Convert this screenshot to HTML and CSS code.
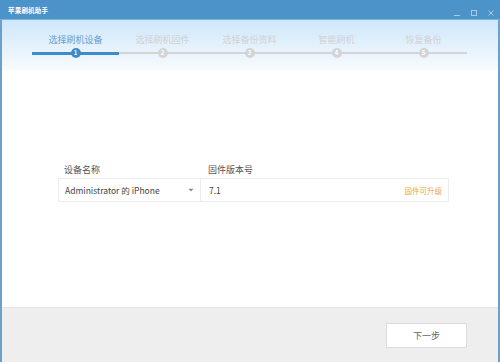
FILE: index.html
```html
<!DOCTYPE html>
<html>
<head>
<meta charset="utf-8">
<title>苹果刷机助手</title>
<link rel="stylesheet" href="styles.css">
</head>
<body>
<div class="window">
  <div class="titlebar">
    <span class="title">苹果刷机助手</span>
    <div class="controls">
      <svg class="ctl" width="8" height="8" viewBox="0 0 8 8"><path d="M1 6.5h6" stroke="#a9cbe6" stroke-width="1"/></svg>
      <svg class="ctl" width="8" height="8" viewBox="0 0 8 8"><rect x="1.5" y="1.5" width="5" height="5" fill="none" stroke="#a9cbe6" stroke-width="1"/></svg>
      <svg class="ctl" width="8" height="8" viewBox="0 0 8 8"><path d="M1.5 1.5l5 5M6.5 1.5l-5 5" stroke="#a9cbe6" stroke-width="1"/></svg>
    </div>
  </div>

  <div class="steps">
    <div class="step done">
      <div class="step-name">选择刷机设备</div>
      <div class="track"><span class="dot">1</span></div>
    </div>
    <div class="step">
      <div class="step-name">选择刷机固件</div>
      <div class="track"><span class="dot">2</span></div>
    </div>
    <div class="step">
      <div class="step-name">选择备份资料</div>
      <div class="track"><span class="dot">3</span></div>
    </div>
    <div class="step">
      <div class="step-name">智能刷机</div>
      <div class="track"><span class="dot">4</span></div>
    </div>
    <div class="step">
      <div class="step-name">恢复备份</div>
      <div class="track"><span class="dot">5</span></div>
    </div>
  </div>

  <div class="main">
    <div class="form">
      <div class="field device">
        <div class="label">设备名称</div>
        <div class="box select">
          <span>Administrator 的 iPhone</span>
          <svg width="6" height="4" viewBox="0 0 6 4"><path d="M0.5 0.8h5L3 3.4z" fill="#888"/></svg>
        </div>
      </div>
      <div class="field firmware">
        <div class="label">固件版本号</div>
        <div class="box input">
          <span>7.1</span>
          <span class="hint">固件可升级</span>
        </div>
      </div>
    </div>
  </div>

  <div class="footer">
    <button class="next">下一步</button>
  </div>
</div>
</body>
</html>
```

FILE: styles.css
```css
/* 苹果刷机助手 - step 1 */

html, body
{ margin: 0;
  padding: 0;
}

body
{ width: 500px;
  height: 362px;
  overflow: hidden;
  font-family: "Noto Sans CJK SC", "Liberation Sans", sans-serif;
  color: #333;
}

.window
{ width: 500px;
  height: 362px;
  box-sizing: border-box;
  display: flex;
  flex-direction: column;
  border-left: 2px solid #6d9fcb;
  border-right: 2px solid #6d9fcb;
  background: #fff;
}

/* Title bar */

.titlebar
{ height: 19px;
  flex: none;
  margin: 0 -2px;
  background: #4c93c9;
  border-bottom: 1px solid #7fb2dd;
  display: flex;
  align-items: center;
  justify-content: space-between;
  padding: 0 5px 0 8px;
}

.title
{ color: #fff;
  font-size: 6.5px;
  font-weight: bold;
  letter-spacing: 0.2px;
}

.controls
{ display: flex;
  gap: 9px;
  margin-top: 6px;
}

/* Steps */

.steps
{ height: 50px;
  flex: none;
  background: linear-gradient(#cee7fa, #f8fbfe);
  display: grid;
  grid-template-columns: repeat(5, 87px);
  padding-left: 30px;
}

.step
{ display: flex;
  flex-direction: column;
  align-items: center;
}

.step-name
{ margin-top: 13px;
  height: 13px;
  font-size: 9px;
  line-height: 13px;
  color: #d0d2d4;
}

.step.done .step-name
{ color: #62a0cf;
}

.track
{ position: relative;
  width: 100%;
  height: 12px;
  margin-top: 1px;
  display: flex;
  justify-content: center;
  align-items: center;
}

.track::before
{ content: "";
  position: absolute;
  left: 0;
  right: 0;
  top: 5px;
  height: 2px;
  background: #d4d4d4;
}

.step.done .track::before
{ top: 5px;
  height: 3px;
  background: #3f8bc7;
}

.dot
{ position: relative;
  width: 10px;
  height: 10px;
  border-radius: 50%;
  background: #d4d4d4;
  color: #fff;
  font-size: 6px;
  line-height: 10px;
  text-align: center;
  font-weight: bold;
}

.step.done .dot
{ background: #3f8bc7;
}

/* Form */

.main
{ flex: 1;
  background: #fff;
}

.form
{ display: flex;
  margin: 92px 0 0 56px;
}

.label
{ font-size: 9px;
  height: 15px;
  line-height: 15px;
  padding-left: 6px;
  margin-bottom: 1px;
  color: #555;
}

.box
{ height: 24px;
  box-sizing: border-box;
  border: 1px solid #ededed;
  display: flex;
  align-items: center;
  justify-content: space-between;
  font-size: 8.5px;
  color: #444;
}

.device .box
{ width: 143px;
  padding: 0 6px 0 6px;
}

.firmware .box
{ width: 248px;
  border-left: none;
  padding: 0 6px 0 8px;
}

.firmware .label
{ padding-left: 7px;
}

.hint
{ color: #e4a850;
  font-size: 7.5px;
}

/* Footer */

.footer
{ height: 55px;
  flex: none;
  background: #eeeeee;
  border-top: 1px solid #e6e6e6;
  box-sizing: border-box;
  display: flex;
  justify-content: flex-end;
  align-items: flex-start;
  padding: 15px 31px 0 0;
}

.next
{ width: 81px;
  height: 25px;
  background: #fff;
  border: 1px solid #dcdcdc;
  font-family: inherit;
  font-size: 9px;
  color: #666;
  padding: 0;
}
```
